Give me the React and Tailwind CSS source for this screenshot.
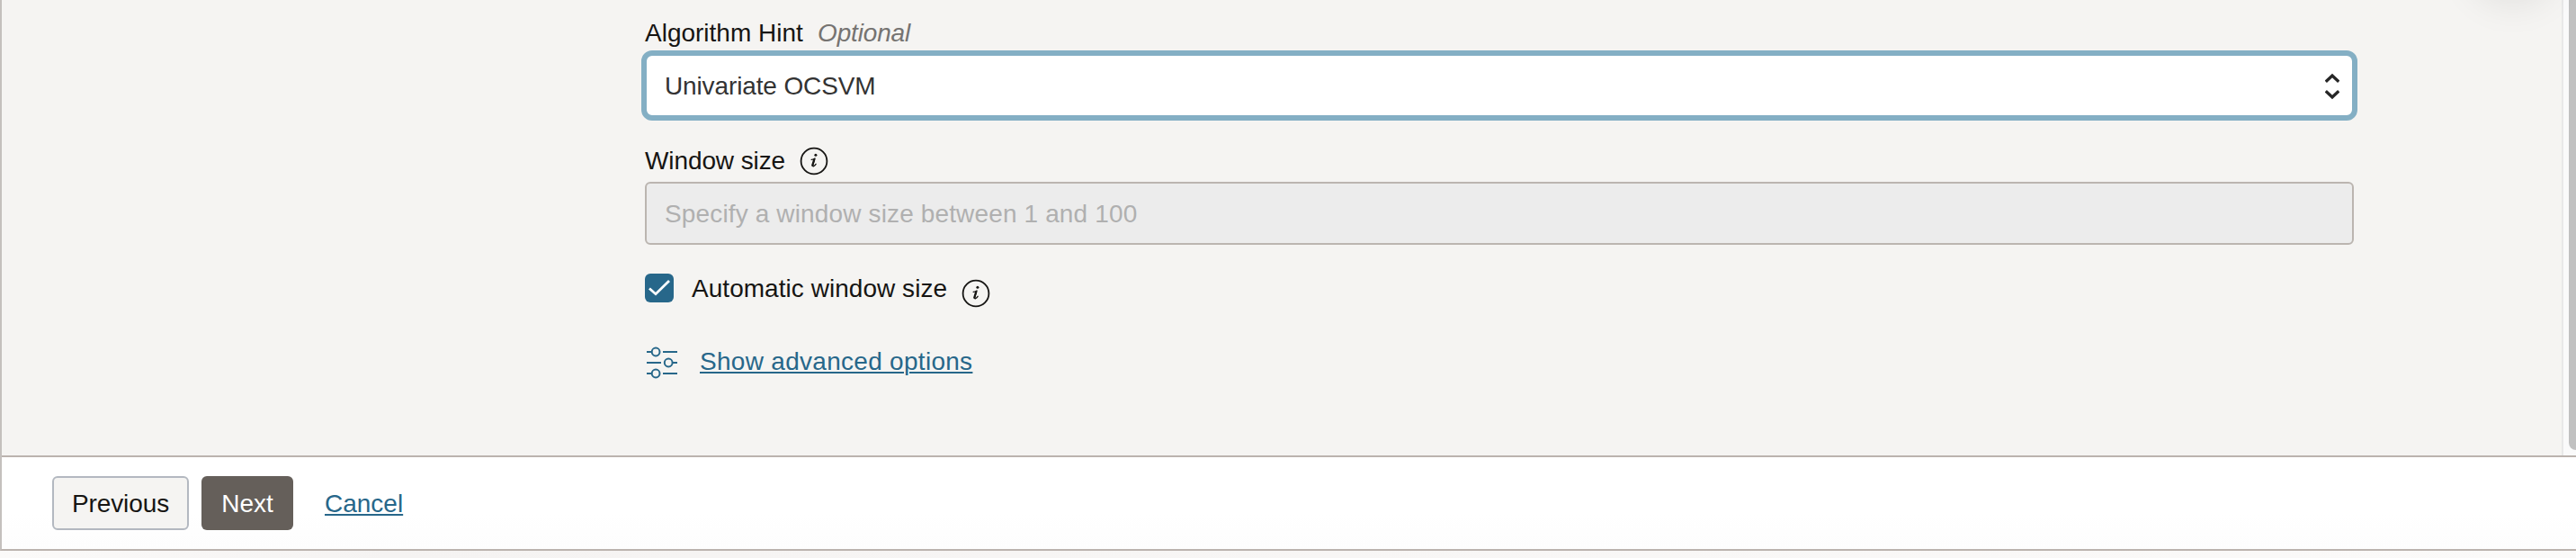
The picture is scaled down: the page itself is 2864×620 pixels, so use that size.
import React from "react";

function InfoIcon({ className }) {
  return (
    <svg className={className} width="32" height="32" viewBox="0 0 32 32" fill="none">
      <circle cx="16" cy="16" r="14.4" stroke="#161513" strokeWidth="1.8" />
      <circle cx="17.9" cy="9.3" r="1.5" fill="#161513" />
      <path
        d="M13.2 14.4c1.5-.1 2.7-.6 3.8-1.4l-2.3 7.4c-.3 1.3.1 1.7.9 1.3 1.1-.5 1.9-1.4 2.5-2.4"
        stroke="#161513"
        strokeWidth="1.3"
        strokeLinecap="round"
        strokeLinejoin="round"
      />
      <path d="M16.2 14.4l-2 6.4" stroke="#161513" strokeWidth="2.2" strokeLinecap="round" />
    </svg>
  );
}

function SlidersIcon() {
  return (
    <svg width="34" height="36" viewBox="0 0 34 36" fill="none" stroke="#27678a" strokeWidth="2">
      <path d="M0 6h5.5M18 6h16M0 18h16M29 18h5M0 30h5.5M18 30h16" />
      <circle cx="10.1" cy="6" r="4.4" />
      <circle cx="24.2" cy="18" r="4.4" />
      <circle cx="10.1" cy="30" r="4.4" />
    </svg>
  );
}

export default function App() {
  return (
    <div className="relative flex h-[620px] w-[2864px] flex-col overflow-hidden bg-[#f6f4f3] font-['Liberation_Sans',Arial,sans-serif] text-[28px] leading-8 text-[#161513]">
      <div className="flex h-[612px] flex-col border-b-2 border-l-2 border-b-[#bbb3ae] border-l-[#c4c0bd]">
        <div className="flex h-[506px] bg-[#f5f4f2]">
          <main className="flex w-[2846px] flex-col pl-[711px]">
            <div className="mt-5 flex h-9 items-start pl-1 pt-px">
              <label className="w-[192px] whitespace-nowrap">Algorithm Hint</label>
              <span className="whitespace-nowrap italic tracking-[-0.15px] text-[#757371]">Optional</span>
            </div>
            <div className="flex h-[78px] w-[1908px] items-center justify-between rounded-xl border-6 border-[#84afc4] bg-white pl-5 pr-[14px] pt-0.5">
              <span className="whitespace-nowrap tracking-[-0.13px] text-[#333]">Univariate OCSVM</span>
              <svg width="16" height="30" viewBox="0 0 16 30" fill="none" stroke="#262626" strokeWidth="3.3">
                <path d="M.8 9.8L8 3l7.2 6.8M.8 20.2L8 27l7.2-6.8" />
              </svg>
            </div>
            <div className="mt-7 flex h-10 items-end pb-[7px] pl-1">
              <label className="w-[172px] whitespace-nowrap tracking-[-0.1px]">Window size</label>
              <InfoIcon />
            </div>
            <div className="ml-1 flex h-[70px] w-[1900px] items-center rounded-[6px] border-2 border-[#bbb5b0] bg-[#ececec] pl-5 pt-0.5">
              <span className="whitespace-nowrap tracking-[0.14px] text-[#b0b0b0]">Specify a window size between 1 and 100</span>
            </div>
            <div className="mt-8 flex h-8 pl-1">
              <span className="flex size-8 items-center justify-center rounded-[6px] bg-[#27678a]">
                <svg width="24" height="18" viewBox="0 0 24 18" fill="none" stroke="#fff" strokeWidth="2.8">
                  <path d="M1 9.5l7 6.2L23 1" />
                </svg>
              </span>
              <label className="ml-5 mt-px w-[300px] whitespace-nowrap tracking-[0.04px]">Automatic window size</label>
              <InfoIcon className="mt-[6px] shrink-0" />
            </div>
            <div className="mt-[49px] flex h-9 pl-[6px]">
              <SlidersIcon />
              <a className="ml-[25px] mt-px whitespace-nowrap tracking-[0.29px] text-[#27678a] underline decoration-2 underline-offset-2">Show advanced options</a>
            </div>
          </main>
          <div className="flex flex-1 justify-end border-l-2 border-[#e8e8e8] bg-[#fafafa]">
            <div className="h-[500px] w-2 rounded-bl-lg bg-[#c1c1c1]" />
          </div>
        </div>
        <footer className="flex h-[104px] items-start border-t-2 border-[#bbb3ae] bg-linear-to-b from-white from-60% to-[#fdfdfd] pl-14 pt-[21px]">
          <button className="flex h-[60px] w-[152px] items-center justify-center rounded-[6px] border-2 border-[#b3b8c0] bg-[#f5f4f2] pt-0.5 tracking-[-0.1px]">Previous</button>
          <button className="ml-[14px] flex h-[60px] w-[102px] items-center justify-center rounded-[6px] bg-[#655f5a] pt-0.5 text-white">Next</button>
          <a className="ml-[35px] mt-[15px] text-[#27678a] underline decoration-2 underline-offset-2">Cancel</a>
        </footer>
      </div>
      <div className="h-2 bg-linear-to-r from-[#fbfaf9] via-[#f5f3f2] via-15% to-[#fbfaf9]" />
      <div className="absolute -top-[98px] left-[2749px] size-[90px] rounded-full shadow-[0_8px_44px_4px_rgba(0,0,0,0.09)]" />
    </div>
  );
}
